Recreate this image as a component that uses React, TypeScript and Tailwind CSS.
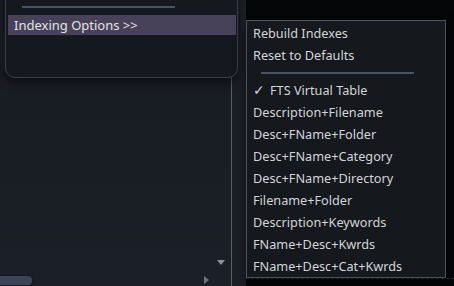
import React from "react";

const items = [
  "Description+Filename",
  "Desc+FName+Folder",
  "Desc+FName+Category",
  "Desc+FName+Directory",
  "Filename+Folder",
  "Description+Keywords",
  "FName+Desc+Kwrds",
  "FName+Desc+Cat+Kwrds",
];

const App = () => {
  return (
    <div
      className="relative w-[454px] h-[286px] overflow-hidden flex bg-[#050608] text-[12.7px] leading-none"
      style={{ fontFamily: '"Noto Sans", "DejaVu Sans", sans-serif' }}
    >
      {/* left panel */}
      <div className="relative w-[232px] h-full bg-gradient-to-b from-[#181b22] to-[#1b1f27] border-r border-[#5b6068]">
        <div className="absolute right-[6px] bottom-[21px] w-0 h-0 border-l-[4px] border-r-[4px] border-t-[5px] border-l-transparent border-r-transparent border-t-[#8d929a]" />
        <div className="absolute right-[22px] bottom-[2px] w-0 h-0 border-t-[4px] border-b-[4px] border-l-[5px] border-t-transparent border-b-transparent border-l-[#6f747c]" />
        <div className="absolute left-0 bottom-0 w-[33px] h-[11px] rounded-r-[5px] bg-[#3a4456] border border-l-0 border-[#15181e]" />
      </div>
      <div className="w-[14px] h-full bg-[#1c1f26]" />
      <div className="flex-1 h-full bg-[#050608] flex flex-col justify-end">
        <div className="h-[3px] mb-[5px] border-t border-dashed border-[#2a2d33]" />
      </div>

      {/* popup menu */}
      <div className="absolute left-[5px] top-[-40px] w-[233px] h-[118px] rounded-b-[10px] border border-[#3a3f47] bg-[#16181f] pl-[2px] pt-[45px] shadow-[0_6px_10px_rgba(0,0,0,0.45)]">
        <div className="ml-[14px] w-[153px] h-[2px] bg-[#4a5263]" />
        <div className="mt-[7px] h-[20px] w-[228px] bg-[#47425a] flex items-center pl-[6px] text-[13px] text-[#e3e3e6]">
          Indexing Options &gt;&gt;
        </div>
      </div>

      {/* sub menu */}
      <div className="absolute left-[246px] top-[20px] w-[200px] h-[258px] border border-[#4e535b] bg-[#15181d] pt-[1px] text-[#d3d5d8] shadow-[0_4px_10px_rgba(0,0,0,0.5)]">
        <div className="h-[22px] flex items-center pl-[6px]">Rebuild Indexes</div>
        <div className="h-[22px] flex items-center pl-[6px]">Reset to Defaults</div>
        <div className="h-[13px] flex items-center pl-[14px]">
          <div className="w-[153px] h-[2px] bg-[#4a5263]" />
        </div>
        <div className="h-[22px] flex items-center pl-[6px]">
          <span className="w-[17px] text-[14px]">✓</span>
          <span>FTS Virtual Table</span>
        </div>
        {items.map((t) => (
          <div key={t} className="h-[22px] flex items-center pl-[6px]">
            {t}
          </div>
        ))}
      </div>
    </div>
  );
};

export default App;
